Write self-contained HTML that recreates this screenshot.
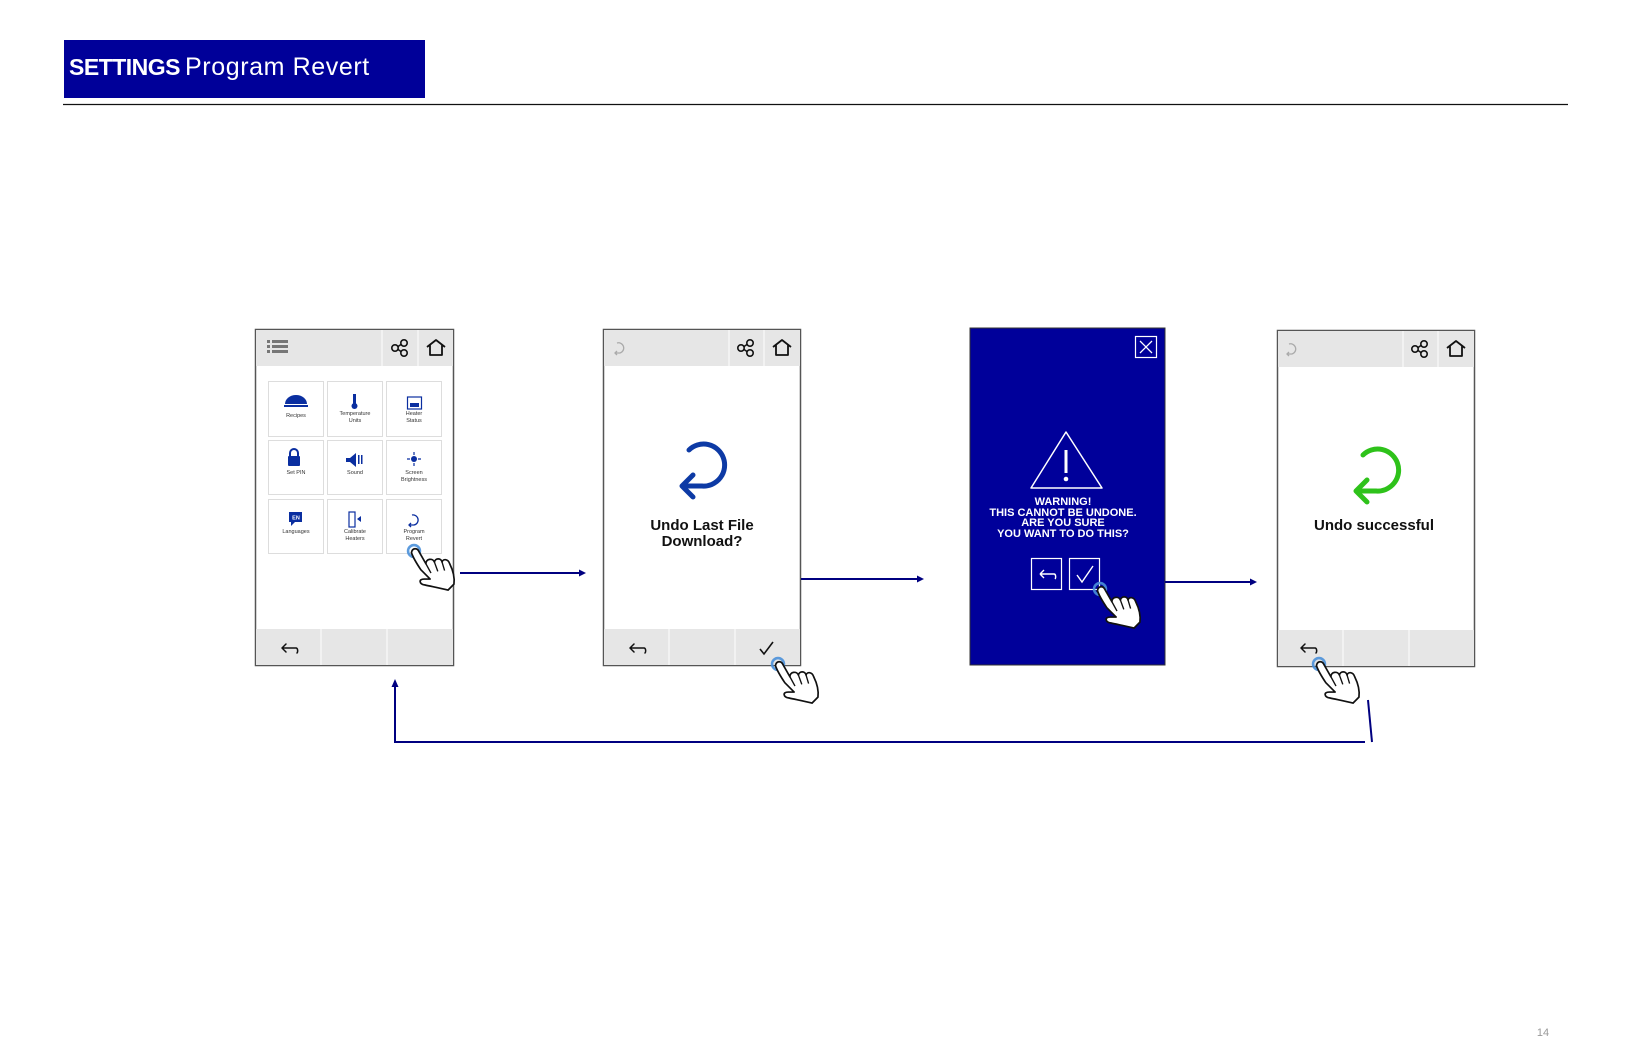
<!DOCTYPE html>
<html><head><meta charset="utf-8"><style>
html,body{margin:0;padding:0;background:#fff;}
body{width:1632px;height:1056px;overflow:hidden;position:relative;font-family:"Liberation Sans",Arial,sans-serif;}
</style></head><body>
<svg width="1632" height="1056" viewBox="0 0 1632 1056" xmlns="http://www.w3.org/2000/svg" style="position:absolute;left:0;top:0" font-family="Liberation Sans, Arial, sans-serif">
<defs>
  <g id="hand">
    <g transform="scale(0.85)">
    <circle cx="0" cy="0" r="7" fill="none" stroke="#4a90d9" stroke-width="3" opacity="0.9"/>
    <path d="M-3,2 C-2,-4 4,-4 6,1 L14,15 C14,9 22,8 24,13 C25,8 32,8 33,13 C34,9 40,9 42,15 C46,23 48,31 47,39 L40,46 C32,44 22,42 13,40 C6,39 5,33 12,33 L19,33 L8,22 C4,16 -1,8 -3,2 Z" fill="#fff" stroke="#111" stroke-width="2" stroke-linejoin="round"/>
    <path d="M14,15 L20,26 M24,13 L28,24 M33,13 L36,23" stroke="#111" stroke-width="1.6" fill="none"/>
    </g>
  </g>
  <g id="share">
    <circle cx="-5" cy="0" r="3.2" fill="none" stroke="#111" stroke-width="1.6"/>
    <circle cx="4" cy="-5" r="3.2" fill="none" stroke="#111" stroke-width="1.6"/>
    <circle cx="4" cy="5" r="3.2" fill="none" stroke="#111" stroke-width="1.6"/>
    <path d="M-2,-1.5 L1,-3.5 M-2,1.5 L1,3.5" stroke="#111" stroke-width="1.6"/>
  </g>
  <g id="home">
    <path d="M-9,-1 L0,-8 L9,-1 M-6,-3 L-6,7 L6,7 L6,-3" fill="none" stroke="#111" stroke-width="1.8" stroke-linejoin="round"/>
  </g>
  <g id="back">
    <path d="M-7,0 L7,0 C9,0 9,4 8,5 M-7,0 L-3,-4 M-7,0 L-3,4" fill="none" stroke="#111" stroke-width="1.5" stroke-linecap="round"/>
  </g>
  <g id="undo">
    <path d="M-13,-16 A21,21 0 1,1 0,20 L-20,20 M-9,9 L-20,20 L-9,31" fill="none" stroke-width="5" stroke-linejoin="round" stroke-linecap="round"/>
  </g>
  <g id="smallundo">
    <path d="M-3,-5 A5,5 0 1,1 0,5 L-5,5 M-3,3 L-5,5 L-3,7" fill="none" stroke="#aaa" stroke-width="1.3"/>
  </g>
</defs>

<!-- header -->
<rect x="64" y="40" width="361" height="58" fill="#000099"/>
<text x="69" y="75" fill="#fff" font-size="23" font-weight="bold" letter-spacing="-0.5">SETTINGS</text>
<text x="185" y="75" fill="#fff" font-size="25" letter-spacing="0.6">Program Revert</text>
<line x1="63" y1="104.5" x2="1568" y2="104.5" stroke="#111" stroke-width="1.3"/>

<!-- Phone 1 -->
<g>
  <rect x="255.5" y="329.5" width="198" height="336" fill="#fff" stroke="#555" stroke-width="1.5"/>
  <rect x="256" y="330" width="197" height="36" fill="#e6e6e6"/>
  <line x1="382" y1="330" x2="382" y2="366" stroke="#fff"/>
  <line x1="418" y1="330" x2="418" y2="366" stroke="#fff"/>
  <g fill="#777"><rect x="267" y="340" width="3" height="3"/><rect x="272" y="340" width="16" height="3"/><rect x="267" y="345" width="3" height="3"/><rect x="272" y="345" width="16" height="3"/><rect x="267" y="350" width="3" height="3"/><rect x="272" y="350" width="16" height="3"/></g>
  <use href="#share" x="400" y="348"/>
  <use href="#home" x="436" y="348"/>
  <rect x="256" y="629" width="197" height="36" fill="#e6e6e6"/>
  <line x1="321" y1="629" x2="321" y2="665" stroke="#fff"/>
  <line x1="387" y1="629" x2="387" y2="665" stroke="#fff"/>
  <use href="#back" x="289" y="648"/>
  <g fill="#fff" stroke="#ddd">
    <rect x="268.5" y="381.5" width="55" height="55"/><rect x="327.5" y="381.5" width="55" height="55"/><rect x="386.5" y="381.5" width="55" height="55"/>
    <rect x="268.5" y="440.5" width="55" height="54"/><rect x="327.5" y="440.5" width="55" height="54"/><rect x="386.5" y="440.5" width="55" height="54"/>
    <rect x="268.5" y="499.5" width="55" height="54"/><rect x="327.5" y="499.5" width="55" height="54"/><rect x="386.5" y="499.5" width="55" height="54"/>
  </g>
  <g fill="#0a2ea0">
    <path d="M285,404 A11,9 0 0 1 307,404 Z"/><rect x="284" y="405" width="24" height="2"/>
    <rect x="353" y="394" width="3" height="11"/><circle cx="354.5" cy="406" r="3"/>
    <rect x="407.5" y="397" width="14" height="12" fill="none" stroke="#0a2ea0" stroke-width="1.2"/><rect x="410" y="403" width="9" height="4"/>
    <rect x="288" y="456" width="12" height="10" rx="1"/><path d="M290,457 V453 A4,4 0 0 1 298,453 V457" fill="none" stroke="#0a2ea0" stroke-width="2"/>
    <path d="M346,458 h4 l6,-5 v14 l-6,-5 h-4z"/><rect x="358" y="455" width="1.5" height="9"/><rect x="361" y="455" width="1.5" height="9"/>
    <circle cx="414" cy="459" r="3"/><path d="M414,452 v3 M414,463 v3 M407,459 h3 M418,459 h3" stroke="#0a2ea0" stroke-width="1.2"/>
    <rect x="289" y="512" width="13" height="10"/><path d="M291,522 l0,4 l4,-4z"/>
    <rect x="349" y="512" width="6" height="15" fill="none" stroke="#0a2ea0" stroke-width="1.2"/><path d="M357,519 l4,-3 v6z"/>
  </g>
  <text x="296" y="519.5" font-size="5.5" fill="#fff" text-anchor="middle" font-weight="bold">EN</text>
  <path d="M412,515 A5,5 0 1,1 414,525 L409,525 M411,523 L409,525 L411,527" fill="none" stroke="#0a2ea0" stroke-width="1.3"/>
  <g font-size="5.5" fill="#333" text-anchor="middle">
    <text x="296" y="417">Recipes</text>
    <text x="355" y="415">Temperature</text><text x="355" y="422">Units</text>
    <text x="414" y="415">Heater</text><text x="414" y="422">Status</text>
    <text x="296" y="474">Set PIN</text>
    <text x="355" y="474">Sound</text>
    <text x="414" y="474">Screen</text><text x="414" y="481">Brightness</text>
    <text x="296" y="533">Languages</text>
    <text x="355" y="533">Calibrate</text><text x="355" y="540">Heaters</text>
    <text x="414" y="533">Program</text><text x="414" y="540">Revert</text>
  </g>
  <use href="#hand" x="414" y="551"/>
</g>

<!-- Phone 2 -->
<g>
  <rect x="603.5" y="329.5" width="197" height="336" fill="#fff" stroke="#555" stroke-width="1.5"/>
  <rect x="604" y="330" width="196" height="36" fill="#e6e6e6"/>
  <line x1="729" y1="330" x2="729" y2="366" stroke="#fff"/>
  <line x1="764" y1="330" x2="764" y2="366" stroke="#fff"/>
  <use href="#smallundo" x="620" y="348"/>
  <use href="#share" x="746" y="348"/>
  <use href="#home" x="782" y="348"/>
  <rect x="604" y="629" width="196" height="36" fill="#e6e6e6"/>
  <line x1="669" y1="629" x2="669" y2="665" stroke="#fff"/>
  <line x1="735" y1="629" x2="735" y2="665" stroke="#fff"/>
  <use href="#back" x="637" y="648"/>
  <path d="M760,649 l4,5 l9,-12" fill="none" stroke="#111" stroke-width="1.6"/>
  <use href="#undo" x="702" y="466" stroke="#0d3aa5"/>
  <text x="702" y="530" font-size="15" font-weight="bold" text-anchor="middle" fill="#111">Undo Last File</text>
  <text x="702" y="546" font-size="15" font-weight="bold" text-anchor="middle" fill="#111">Download?</text>
  <use href="#hand" x="778" y="664"/>
</g>

<!-- Phone 3 -->
<g>
  <rect x="970" y="328" width="195" height="337" fill="#00009a" stroke="#333" stroke-width="1"/>
  <rect x="1135.5" y="336.5" width="21" height="21" fill="none" stroke="#fff" stroke-width="1.2"/>
  <path d="M1140,341 L1152,353 M1152,341 L1140,353" stroke="#fff" stroke-width="1.3"/>
  <path d="M1066,432 L1102,488 L1031,488 Z" fill="none" stroke="#fff" stroke-width="1.5" stroke-linejoin="round"/>
  <rect x="1064.5" y="450" width="3" height="23" fill="#fff"/><circle cx="1066" cy="479" r="2.3" fill="#fff"/>
  <g font-size="11" font-weight="bold" fill="#fff" text-anchor="middle">
    <text x="1063" y="505">WARNING!</text>
    <text x="1063" y="516">THIS CANNOT BE UNDONE.</text>
    <text x="1063" y="526">ARE YOU SURE</text>
    <text x="1063" y="537">YOU WANT TO DO THIS?</text>
  </g>
  <rect x="1031.5" y="558.5" width="30" height="31" fill="none" stroke="#fff" stroke-width="1.2"/>
  <rect x="1069.5" y="558.5" width="30" height="31" fill="none" stroke="#fff" stroke-width="1.2"/>
  <path d="M1040,574 L1054,574 C1056,574 1056,578 1055,579 M1040,574 L1044,570 M1040,574 L1044,578" fill="none" stroke="#fff" stroke-width="1.4"/>
  <path d="M1077,575 l5,7 l11,-16" fill="none" stroke="#fff" stroke-width="1.4"/>
  <use href="#hand" x="1100" y="589"/>
</g>

<!-- Phone 4 -->
<g>
  <rect x="1277.5" y="330.5" width="197" height="336" fill="#fff" stroke="#555" stroke-width="1.5"/>
  <rect x="1278" y="331" width="196" height="36" fill="#e6e6e6"/>
  <line x1="1403" y1="331" x2="1403" y2="367" stroke="#fff"/>
  <line x1="1438" y1="331" x2="1438" y2="367" stroke="#fff"/>
  <use href="#smallundo" x="1292" y="349"/>
  <use href="#share" x="1420" y="349"/>
  <use href="#home" x="1456" y="349"/>
  <rect x="1278" y="630" width="196" height="36" fill="#e6e6e6"/>
  <line x1="1343" y1="630" x2="1343" y2="666" stroke="#fff"/>
  <line x1="1409" y1="630" x2="1409" y2="666" stroke="#fff"/>
  <use href="#back" x="1308" y="648"/>
  <use href="#undo" x="1376" y="471" stroke="#2ec21a"/>
  <text x="1374" y="530" font-size="15" font-weight="bold" text-anchor="middle" fill="#111">Undo successful</text>
  <use href="#hand" x="1319" y="664"/>
</g>

<!-- arrows -->
<g stroke="#000080" stroke-width="2" fill="#000080">
  <line x1="460" y1="573" x2="580" y2="573"/><path d="M586,573 l-7,-3.5 v7z" stroke="none"/>
  <line x1="801" y1="579" x2="918" y2="579"/><path d="M924,579 l-7,-3.5 v7z" stroke="none"/>
  <line x1="1165" y1="582" x2="1251" y2="582"/><path d="M1257,582 l-7,-3.5 v7z" stroke="none"/>
  <polyline points="1372,742 1368,700" fill="none"/>
  <polyline points="1365,742 395,742 395,686" fill="none"/>
  <path d="M395,679 l-3.5,8 h7z" stroke="none"/>
</g>

<text x="1543" y="1036" font-size="11" fill="#999" text-anchor="middle">14</text>
</svg>
</body></html>
